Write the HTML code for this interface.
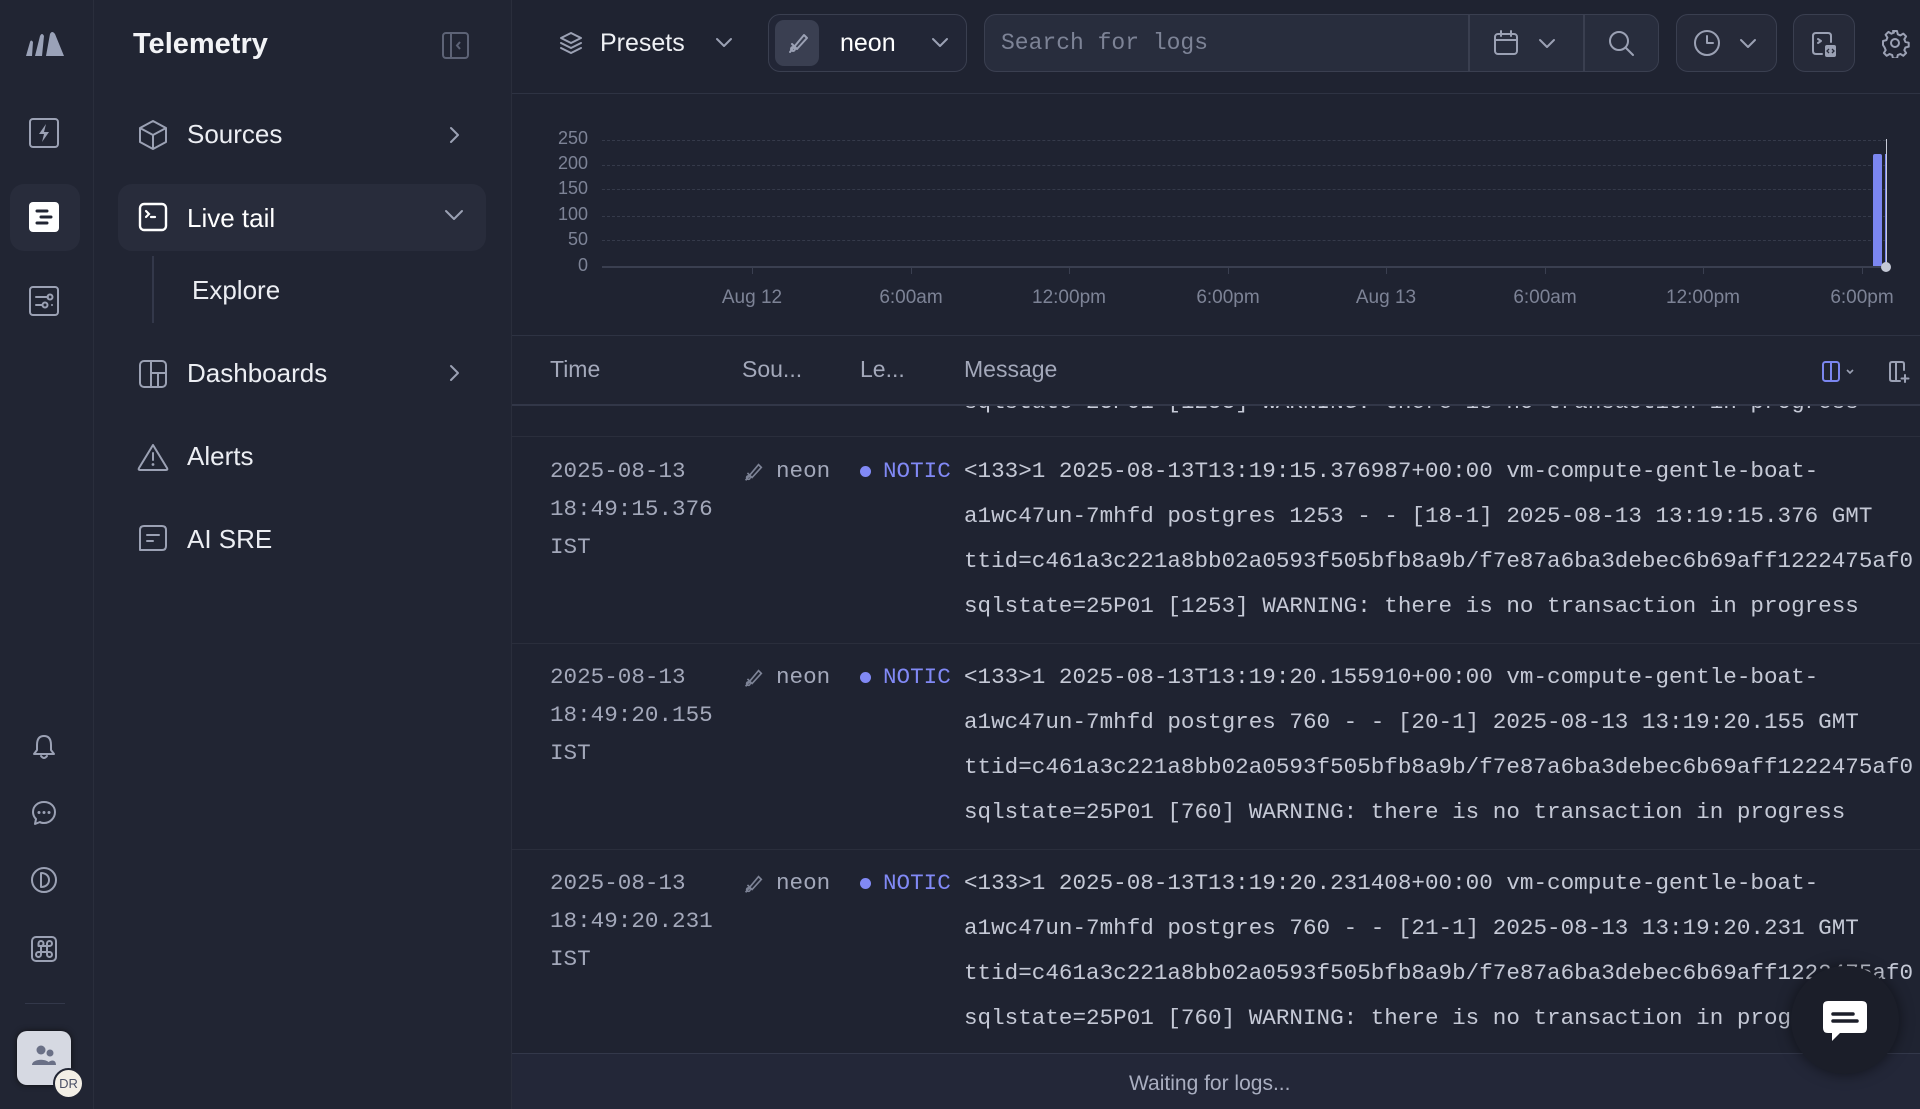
<!DOCTYPE html>
<html><head><meta charset="utf-8"><style>
*{box-sizing:border-box;margin:0;padding:0}
body{width:1920px;height:1109px;overflow:hidden;background:#1f2331;font-family:"Liberation Sans",sans-serif;color:#e8eaf0;position:relative}
.abs{position:absolute}
.rail{left:0;top:0;width:94px;height:1109px;background:#212533;border-right:1px solid #2a2e3c}
.nav{left:94px;top:0;width:418px;height:1109px;background:#212533;border-right:1px solid #2a2e3c}
.ic{stroke:#9ba1b4;fill:none;stroke-width:2;stroke-linecap:round;stroke-linejoin:round}
.navitem{position:absolute;left:0;font-size:26px;color:#eceef3}
.mono{font-family:"Liberation Mono",monospace}
.box{position:absolute;border:1.5px solid #3a3f50;border-radius:12px;background:#262a39}
.ylab{position:absolute;right:0;font-size:18px;color:#7d8396;text-align:right;width:40px}
.xlab{position:absolute;font-size:19px;color:#7d8396;transform:translateX(-50%);white-space:nowrap}
.grid{position:absolute;left:602px;width:1284px;border-top:1.5px dashed #353a4a}
.line{position:absolute;font-family:"Liberation Mono",monospace;font-size:22.6px;color:#c5c9d6;white-space:nowrap;line-height:45px}
.th{position:absolute;top:356px;font-size:23px;color:#a3a8ba}
</style></head><body>
<div class="abs rail">
  <svg class="abs" style="left:24px;top:30px" width="42" height="28" viewBox="0 0 42 28"><path d="M2 26 L6 12 Q7 9 9 12 L8 26Z M11 26 L16 6 Q18 2 20 6 L18 26Z M22 26 L26 4 Q28 0 31 4 L40 26Z" fill="#9aa2b8"/></svg>
  <svg class="abs" style="left:28px;top:117px" width="32" height="32" viewBox="0 0 32 32"><rect class="ic" x="2" y="2" width="28" height="28" rx="3"/><path d="M18 7 L11 17 H16 L14 25 L21 15 H16Z" fill="#9ba1b4"/></svg>
  <div class="abs" style="left:10px;top:184px;width:70px;height:67px;border-radius:14px;background:#282c3b"></div>
  <svg class="abs" style="left:28px;top:201px" width="32" height="32" viewBox="0 0 32 32"><rect x="1" y="1" width="30" height="30" rx="4" fill="#fff"/><path d="M9 10h10M13 16h10M9 22h10" stroke="#212533" stroke-width="3" stroke-linecap="round"/></svg>
  <svg class="abs" style="left:28px;top:285px" width="32" height="32" viewBox="0 0 32 32"><rect class="ic" x="2" y="2" width="28" height="28" rx="3"/><path class="ic" d="M8 12h12M8 20h6M24 20h0"/><circle class="ic" cx="22" cy="12" r="2.5"/><circle class="ic" cx="17" cy="20" r="2.5"/></svg>
  <svg class="abs" style="left:31px;top:733px" width="26" height="28" viewBox="0 0 26 28"><path class="ic" d="M13 3 C7 3 6 8 6 12 V17 L3 21 H23 L20 17 V12 C20 8 19 3 13 3Z M10 23 Q13 27 16 23"/></svg>
  <svg class="abs" style="left:30px;top:799px" width="28" height="28" viewBox="0 0 28 28"><path class="ic" d="M14 3 C8 3 3 7 3 13 C3 16 4 18 6 20 L5 25 L10 23 C11 24 13 24 14 24 C20 24 25 19 25 13 C25 7 20 3 14 3Z"/><circle cx="9" cy="13.5" r="1.5" fill="#9ba1b4"/><circle cx="14" cy="13.5" r="1.5" fill="#9ba1b4"/><circle cx="19" cy="13.5" r="1.5" fill="#9ba1b4"/></svg>
  <svg class="abs" style="left:30px;top:866px" width="28" height="28" viewBox="0 0 28 28"><circle class="ic" cx="14" cy="14" r="12"/><path class="ic" d="M11 7 V21 C16 21 19 18 19 14 C19 10 16 7 11 7Z"/></svg>
  <svg class="abs" style="left:30px;top:935px" width="28" height="28" viewBox="0 0 28 28"><rect class="ic" x="2" y="2" width="24" height="24" rx="4"/><path class="ic" d="M11 11h6v6h-6z M11 11 a2.5 2.5 0 1 0 -2.5 -2.5 V11z M17 11 V8.5 a2.5 2.5 0 1 1 2.5 2.5z M11 17 H8.5 a2.5 2.5 0 1 0 2.5 2.5z M17 17 v2.5 a2.5 2.5 0 1 0 2.5 -2.5z"/></svg>
  <div class="abs" style="left:25px;top:1003px;width:40px;height:1px;background:#33384a"></div>
  <div class="abs" style="left:17px;top:1031px;width:54px;height:54px;border-radius:10px;background:#d6d9e2;box-shadow:0 0 6px #111"></div>
  <svg class="abs" style="left:30px;top:1044px" width="28" height="24" viewBox="0 0 28 24"><circle cx="11" cy="6" r="4.5" fill="#6a7086"/><circle cx="20" cy="9" r="3.5" fill="#6a7086"/><path d="M2 21 C2 14 20 14 20 21Z M17 21 C18 16 26 14 26 21Z" fill="#6a7086"/></svg>
  <div class="abs" style="left:53px;top:1068px;width:31px;height:31px;border-radius:50%;background:#f3efe6;border:2px solid #212533;font-size:13px;color:#4a5066;text-align:center;line-height:27px">DR</div>
</div>
<div class="abs nav">
  <div class="abs" style="left:39px;top:28px;font-size:29px;font-weight:bold;color:#f2f3f6">Telemetry</div>
  <svg class="abs" style="left:348px;top:32px" width="27" height="27" viewBox="0 0 27 27"><rect x="1" y="1" width="25" height="25" rx="3" fill="none" stroke="#5d6376" stroke-width="2"/><path d="M9 1v25M18 10l-3 3.5 3 3.5" fill="none" stroke="#5d6376" stroke-width="2"/></svg>
  <svg class="abs" style="left:44px;top:119px" width="30" height="32" viewBox="0 0 30 32"><path class="ic" d="M15 2 L28 9 V23 L15 30 L2 23 V9Z M2 9 L15 16 L28 9 M15 16 V30"/></svg>
  <div class="navitem" style="left:93px;top:119px">Sources</div>
  <svg class="abs" style="left:354px;top:125px" width="14" height="20" viewBox="0 0 14 20"><path class="ic" d="M3 3 L10 10 L3 17"/></svg>
  <div class="abs" style="left:24px;top:184px;width:368px;height:67px;border-radius:14px;background:#282c3b"></div>
  <svg class="abs" style="left:44px;top:202px" width="30" height="30" viewBox="0 0 30 30"><rect x="2" y="2" width="26" height="26" rx="4" fill="none" stroke="#fff" stroke-width="2.4"/><path d="M8 9 L11 12 L8 15 M13 15 H17" fill="none" stroke="#fff" stroke-width="2.2" stroke-linecap="round"/></svg>
  <div class="navitem" style="left:93px;top:203px;color:#fff">Live tail</div>
  <svg class="abs" style="left:349px;top:208px" width="22" height="14" viewBox="0 0 22 14"><path class="ic" d="M3 3 L11 11 L19 3"/></svg>
  <div class="abs" style="left:58px;top:256px;width:2px;height:67px;background:#33384a"></div>
  <div class="navitem" style="left:98px;top:275px">Explore</div>
  <svg class="abs" style="left:44px;top:359px" width="30" height="30" viewBox="0 0 30 30"><rect class="ic" x="2" y="2" width="26" height="26" rx="4"/><path class="ic" d="M13 2v26M13 14h15M20 14v14"/></svg>
  <div class="navitem" style="left:93px;top:358px">Dashboards</div>
  <svg class="abs" style="left:354px;top:363px" width="14" height="20" viewBox="0 0 14 20"><path class="ic" d="M3 3 L10 10 L3 17"/></svg>
  <svg class="abs" style="left:42px;top:442px" width="34" height="30" viewBox="0 0 34 30"><path class="ic" d="M17 3 L31 26 Q32 28 30 28 H4 Q2 28 3 26Z M17 11 V18"/><circle cx="17" cy="22.5" r="1.4" fill="#9ba1b4"/></svg>
  <div class="navitem" style="left:93px;top:441px">Alerts</div>
  <svg class="abs" style="left:43px;top:524px" width="32" height="30" viewBox="0 0 32 30"><path class="ic" d="M3 6 Q3 2 7 2 H25 Q29 2 29 6 V22 Q29 26 25 26 H3Z M10 11 H22 M10 17 H16"/></svg>
  <div class="navitem" style="left:93px;top:524px">AI SRE</div>
</div>
<!-- top bar -->
<div class="abs" style="left:512px;top:93px;width:1408px;height:1px;background:#2e3343"></div>
<svg class="abs" style="left:558px;top:30px" width="26" height="28" viewBox="0 0 26 28"><path class="ic" d="M13 3 L23 8 L13 13 L3 8Z M3 13 L13 18 L23 13 M3 18 L13 23 L23 18"/></svg>
<div class="abs" style="left:600px;top:29px;font-size:25px;color:#eef0f4">Presets</div>
<svg class="abs" style="left:714px;top:36px" width="20" height="14" viewBox="0 0 20 14"><path class="ic" d="M3 3 L10 10 L17 3"/></svg>
<div class="box" style="left:768px;top:14px;width:199px;height:58px;background:#222636"></div>
<div class="abs" style="left:775px;top:20px;width:44px;height:46px;border-radius:9px;background:#3a3f51"></div>
<svg class="abs" style="left:785px;top:30px" width="26" height="26" viewBox="0 0 26 26"><path class="ic" d="M9 17 L19 5 L22 8 L12 19Z M5 22 L9 17 M7 14 L12 19" stroke-width="1.8"/><circle class="ic" cx="8" cy="19" r="2" stroke-width="1.6"/></svg>
<div class="abs" style="left:840px;top:29px;font-size:25px;color:#fff">neon</div>
<svg class="abs" style="left:930px;top:36px" width="20" height="14" viewBox="0 0 20 14"><path class="ic" d="M3 3 L10 10 L17 3"/></svg>
<div class="box" style="left:984px;top:14px;width:675px;height:58px;background:#282d3d"></div>
<div class="abs" style="left:1468px;top:14px;width:1.5px;height:58px;background:#3a3f50"></div>
<div class="abs" style="left:1583px;top:14px;width:1.5px;height:58px;background:#3a3f50"></div>
<div class="abs mono" style="left:1001px;top:30px;font-size:23px;color:#7d8396">Search for logs</div>
<svg class="abs" style="left:1492px;top:29px" width="28" height="28" viewBox="0 0 28 28"><rect class="ic" x="3" y="5" width="22" height="20" rx="3"/><path class="ic" d="M3 11h22M9 2v5M19 2v5"/></svg>
<svg class="abs" style="left:1537px;top:37px" width="20" height="14" viewBox="0 0 20 14"><path class="ic" d="M3 3 L10 10 L17 3"/></svg>
<svg class="abs" style="left:1606px;top:28px" width="30" height="30" viewBox="0 0 30 30"><circle class="ic" cx="13" cy="13" r="9"/><path class="ic" d="M20 20 L27 27"/></svg>
<div class="box" style="left:1676px;top:14px;width:101px;height:58px"></div>
<svg class="abs" style="left:1692px;top:28px" width="30" height="30" viewBox="0 0 30 30"><circle class="ic" cx="15" cy="15" r="12"/><path class="ic" d="M15 8v7h6"/></svg>
<svg class="abs" style="left:1738px;top:37px" width="20" height="14" viewBox="0 0 20 14"><path class="ic" d="M3 3 L10 10 L17 3"/></svg>
<div class="box" style="left:1793px;top:14px;width:62px;height:58px"></div>
<svg class="abs" style="left:1810px;top:30px" width="30" height="30" viewBox="0 0 30 30"><path class="ic" d="M12 24 H6 Q3 24 3 21 V6 Q3 3 6 3 H18 Q21 3 21 6 V12 M8 9 L11 11 L8 13"/><rect x="15" y="15" width="11" height="12" rx="2" fill="#9ba1b4"/><path d="M19 19 l-2 2 2 2 M22 19 l2 2 -2 2" stroke="#262a39" stroke-width="1.3" fill="none"/></svg>
<svg class="abs" style="left:1880px;top:28px" width="30" height="30" viewBox="0 0 30 30"><circle class="ic" cx="15" cy="15" r="4"/><path class="ic" d="M13 3h4l.8 3.3 2.6 1.1 2.9-1.8 2.8 2.8-1.8 2.9 1.1 2.6 3.3.8v4l-3.3.8-1.1 2.6 1.8 2.9-2.8 2.8-2.9-1.8-2.6 1.1-.8 3.3h-4l-.8-3.3-2.6-1.1-2.9 1.8-2.8-2.8 1.8-2.9-1.1-2.6L3 17v-4l3.3-.8 1.1-2.6-1.8-2.9 2.8-2.8 2.9 1.8 2.6-1.1z"/></svg>
<!-- chart -->
<div class="ylab" style="left:548px;top:128px">250</div>
<div class="ylab" style="left:548px;top:153px">200</div>
<div class="ylab" style="left:548px;top:178px">150</div>
<div class="ylab" style="left:548px;top:204px">100</div>
<div class="ylab" style="left:548px;top:229px">50</div>
<div class="ylab" style="left:548px;top:255px">0</div>
<div class="grid" style="top:140px"></div>
<div class="grid" style="top:165px"></div>
<div class="grid" style="top:189px"></div>
<div class="grid" style="top:216px"></div>
<div class="grid" style="top:240px"></div>
<div class="abs" style="left:602px;top:266px;width:1284px;height:1.5px;background:#3a3f50"></div>
<div class="abs" style="left:752px;top:267px;width:1px;height:7px;background:#3a3f50"></div>
<div class="abs" style="left:911px;top:267px;width:1px;height:7px;background:#3a3f50"></div>
<div class="abs" style="left:1069px;top:267px;width:1px;height:7px;background:#3a3f50"></div>
<div class="abs" style="left:1228px;top:267px;width:1px;height:7px;background:#3a3f50"></div>
<div class="abs" style="left:1386px;top:267px;width:1px;height:7px;background:#3a3f50"></div>
<div class="abs" style="left:1545px;top:267px;width:1px;height:7px;background:#3a3f50"></div>
<div class="abs" style="left:1703px;top:267px;width:1px;height:7px;background:#3a3f50"></div>
<div class="abs" style="left:1862px;top:267px;width:1px;height:7px;background:#3a3f50"></div>
<div class="xlab" style="left:752px;top:287px">Aug 12</div>
<div class="xlab" style="left:911px;top:287px">6:00am</div>
<div class="xlab" style="left:1069px;top:287px">12:00pm</div>
<div class="xlab" style="left:1228px;top:287px">6:00pm</div>
<div class="xlab" style="left:1386px;top:287px">Aug 13</div>
<div class="xlab" style="left:1545px;top:287px">6:00am</div>
<div class="xlab" style="left:1703px;top:287px">12:00pm</div>
<div class="xlab" style="left:1862px;top:287px">6:00pm</div>
<div class="abs" style="left:1873px;top:154px;width:9px;height:112px;background:#7b86f0;border-radius:2px 2px 0 0"></div>
<div class="abs" style="left:1885px;top:154px;width:2px;height:112px;background:#7b86f0"></div>
<div class="abs" style="left:1886px;top:139px;width:1px;height:127px;background:#c8ccd8"></div>
<div class="abs" style="left:1881px;top:262px;width:10px;height:10px;border-radius:50%;background:#c5c9d6"></div>
<div class="abs" style="left:512px;top:335px;width:1408px;height:1.5px;background:#2e3343"></div>
<!-- table -->
<div class="abs" style="left:512px;top:336px;width:1408px;height:70px;background:#202432;z-index:2"></div>
<div class="abs" style="left:512px;top:404px;width:1408px;height:1.5px;background:#323748;z-index:2"></div>
<div class="th" style="left:550px;z-index:3">Time</div>
<div class="th" style="left:742px;z-index:3">Sou...</div>
<div class="th" style="left:860px;z-index:3">Le...</div>
<div class="th" style="left:964px;z-index:3">Message</div>
<svg class="abs" style="left:1821px;top:360px;z-index:3" width="36" height="24" viewBox="0 0 36 24"><rect x="2" y="2" width="16" height="19" rx="2.5" fill="none" stroke="#7b86f0" stroke-width="2"/><path d="M10 2v19" stroke="#7b86f0" stroke-width="2"/><path d="M26 10l3 3 3-3" stroke="#9ba1b4" stroke-width="1.6" fill="none"/></svg>
<svg class="abs" style="left:1887px;top:360px;z-index:3" width="26" height="24" viewBox="0 0 26 24"><path class="ic" d="M13 21H5Q3 21 3 19V4Q3 2 5 2H15Q17 2 17 4V10M9 2v19M18 15v7M14.5 18.5h7" stroke-width="1.8"/></svg>
<div class="line" style="left:964px;top:380px">sqlstate=25P01 [1253] WARNING: there is no transaction in progress</div>
<div class="abs" style="left:512px;top:436px;width:1408px;height:1px;background:#2a2e3c"></div>
<div class="abs" style="left:512px;top:643px;width:1408px;height:1px;background:#2a2e3c"></div>
<div class="abs" style="left:512px;top:849px;width:1408px;height:1px;background:#2a2e3c"></div>

<div class="line" style="left:550px;top:452px;color:#a3a8ba;line-height:38px">2025-08-13<br>18:49:15.376<br>IST</div>
<svg class="abs" style="left:741px;top:460px" width="24" height="24" viewBox="0 0 26 26"><path d="M9 17 L19 5 L22 8 L12 19Z M5 22 L9 17 M7 14 L12 19" fill="none" stroke="#7d8396" stroke-width="1.8"/><circle cx="8" cy="19" r="2" fill="none" stroke="#7d8396" stroke-width="1.6"/></svg>
<div class="line" style="left:776px;top:449px;color:#a3a8ba">neon</div>
<div class="abs" style="left:860px;top:466px;width:11px;height:11px;border-radius:50%;background:#8189f5"></div>
<div class="line" style="left:883px;top:449px;color:#8189f5">NOTIC</div>
<div class="line" style="left:964px;top:449px">&lt;133&gt;1 2025-08-13T13:19:15.376987+00:00 vm-compute-gentle-boat-<br>a1wc47un-7mhfd postgres 1253 - - [18-1] 2025-08-13 13:19:15.376 GMT<br>ttid=c461a3c221a8bb02a0593f505bfb8a9b/f7e87a6ba3debec6b69aff1222475af0<br>sqlstate=25P01 [1253] WARNING: there is no transaction in progress</div>

<div class="line" style="left:550px;top:658px;color:#a3a8ba;line-height:38px">2025-08-13<br>18:49:20.155<br>IST</div>
<svg class="abs" style="left:741px;top:666px" width="24" height="24" viewBox="0 0 26 26"><path d="M9 17 L19 5 L22 8 L12 19Z M5 22 L9 17 M7 14 L12 19" fill="none" stroke="#7d8396" stroke-width="1.8"/><circle cx="8" cy="19" r="2" fill="none" stroke="#7d8396" stroke-width="1.6"/></svg>
<div class="line" style="left:776px;top:655px;color:#a3a8ba">neon</div>
<div class="abs" style="left:860px;top:672px;width:11px;height:11px;border-radius:50%;background:#8189f5"></div>
<div class="line" style="left:883px;top:655px;color:#8189f5">NOTIC</div>
<div class="line" style="left:964px;top:655px">&lt;133&gt;1 2025-08-13T13:19:20.155910+00:00 vm-compute-gentle-boat-<br>a1wc47un-7mhfd postgres 760 - - [20-1] 2025-08-13 13:19:20.155 GMT<br>ttid=c461a3c221a8bb02a0593f505bfb8a9b/f7e87a6ba3debec6b69aff1222475af0<br>sqlstate=25P01 [760] WARNING: there is no transaction in progress</div>

<div class="line" style="left:550px;top:864px;color:#a3a8ba;line-height:38px">2025-08-13<br>18:49:20.231<br>IST</div>
<svg class="abs" style="left:741px;top:872px" width="24" height="24" viewBox="0 0 26 26"><path d="M9 17 L19 5 L22 8 L12 19Z M5 22 L9 17 M7 14 L12 19" fill="none" stroke="#7d8396" stroke-width="1.8"/><circle cx="8" cy="19" r="2" fill="none" stroke="#7d8396" stroke-width="1.6"/></svg>
<div class="line" style="left:776px;top:861px;color:#a3a8ba">neon</div>
<div class="abs" style="left:860px;top:878px;width:11px;height:11px;border-radius:50%;background:#8189f5"></div>
<div class="line" style="left:883px;top:861px;color:#8189f5">NOTIC</div>
<div class="line" style="left:964px;top:861px">&lt;133&gt;1 2025-08-13T13:19:20.231408+00:00 vm-compute-gentle-boat-<br>a1wc47un-7mhfd postgres 760 - - [21-1] 2025-08-13 13:19:20.231 GMT<br>ttid=c461a3c221a8bb02a0593f505bfb8a9b/f7e87a6ba3debec6b69aff1222475af0<br>sqlstate=25P01 [760] WARNING: there is no transaction in progress</div>

<div class="abs" style="left:512px;top:1053px;width:1408px;height:56px;background:#232738;border-top:1.5px solid #33384a"></div>
<div class="abs" style="left:1129px;top:1072px;font-size:21px;color:#a9aec0">Waiting for logs...</div>
<div class="abs" style="left:1791px;top:966px;width:108px;height:108px;border-radius:50%;background:#1b1e29;box-shadow:0 0 14px rgba(0,0,0,.5)"></div>
<svg class="abs" style="left:1822px;top:1000px" width="46" height="46" viewBox="0 0 46 46"><path d="M6 1H40Q45 1 45 6V28Q45 33 40 33H18L10 41V33H6Q1 33 1 28V6Q1 1 6 1Z" fill="#fff"/><path d="M11 14H31M11 21H35" stroke="#1b1e29" stroke-width="3.5" stroke-linecap="round"/></svg>
</body></html>
